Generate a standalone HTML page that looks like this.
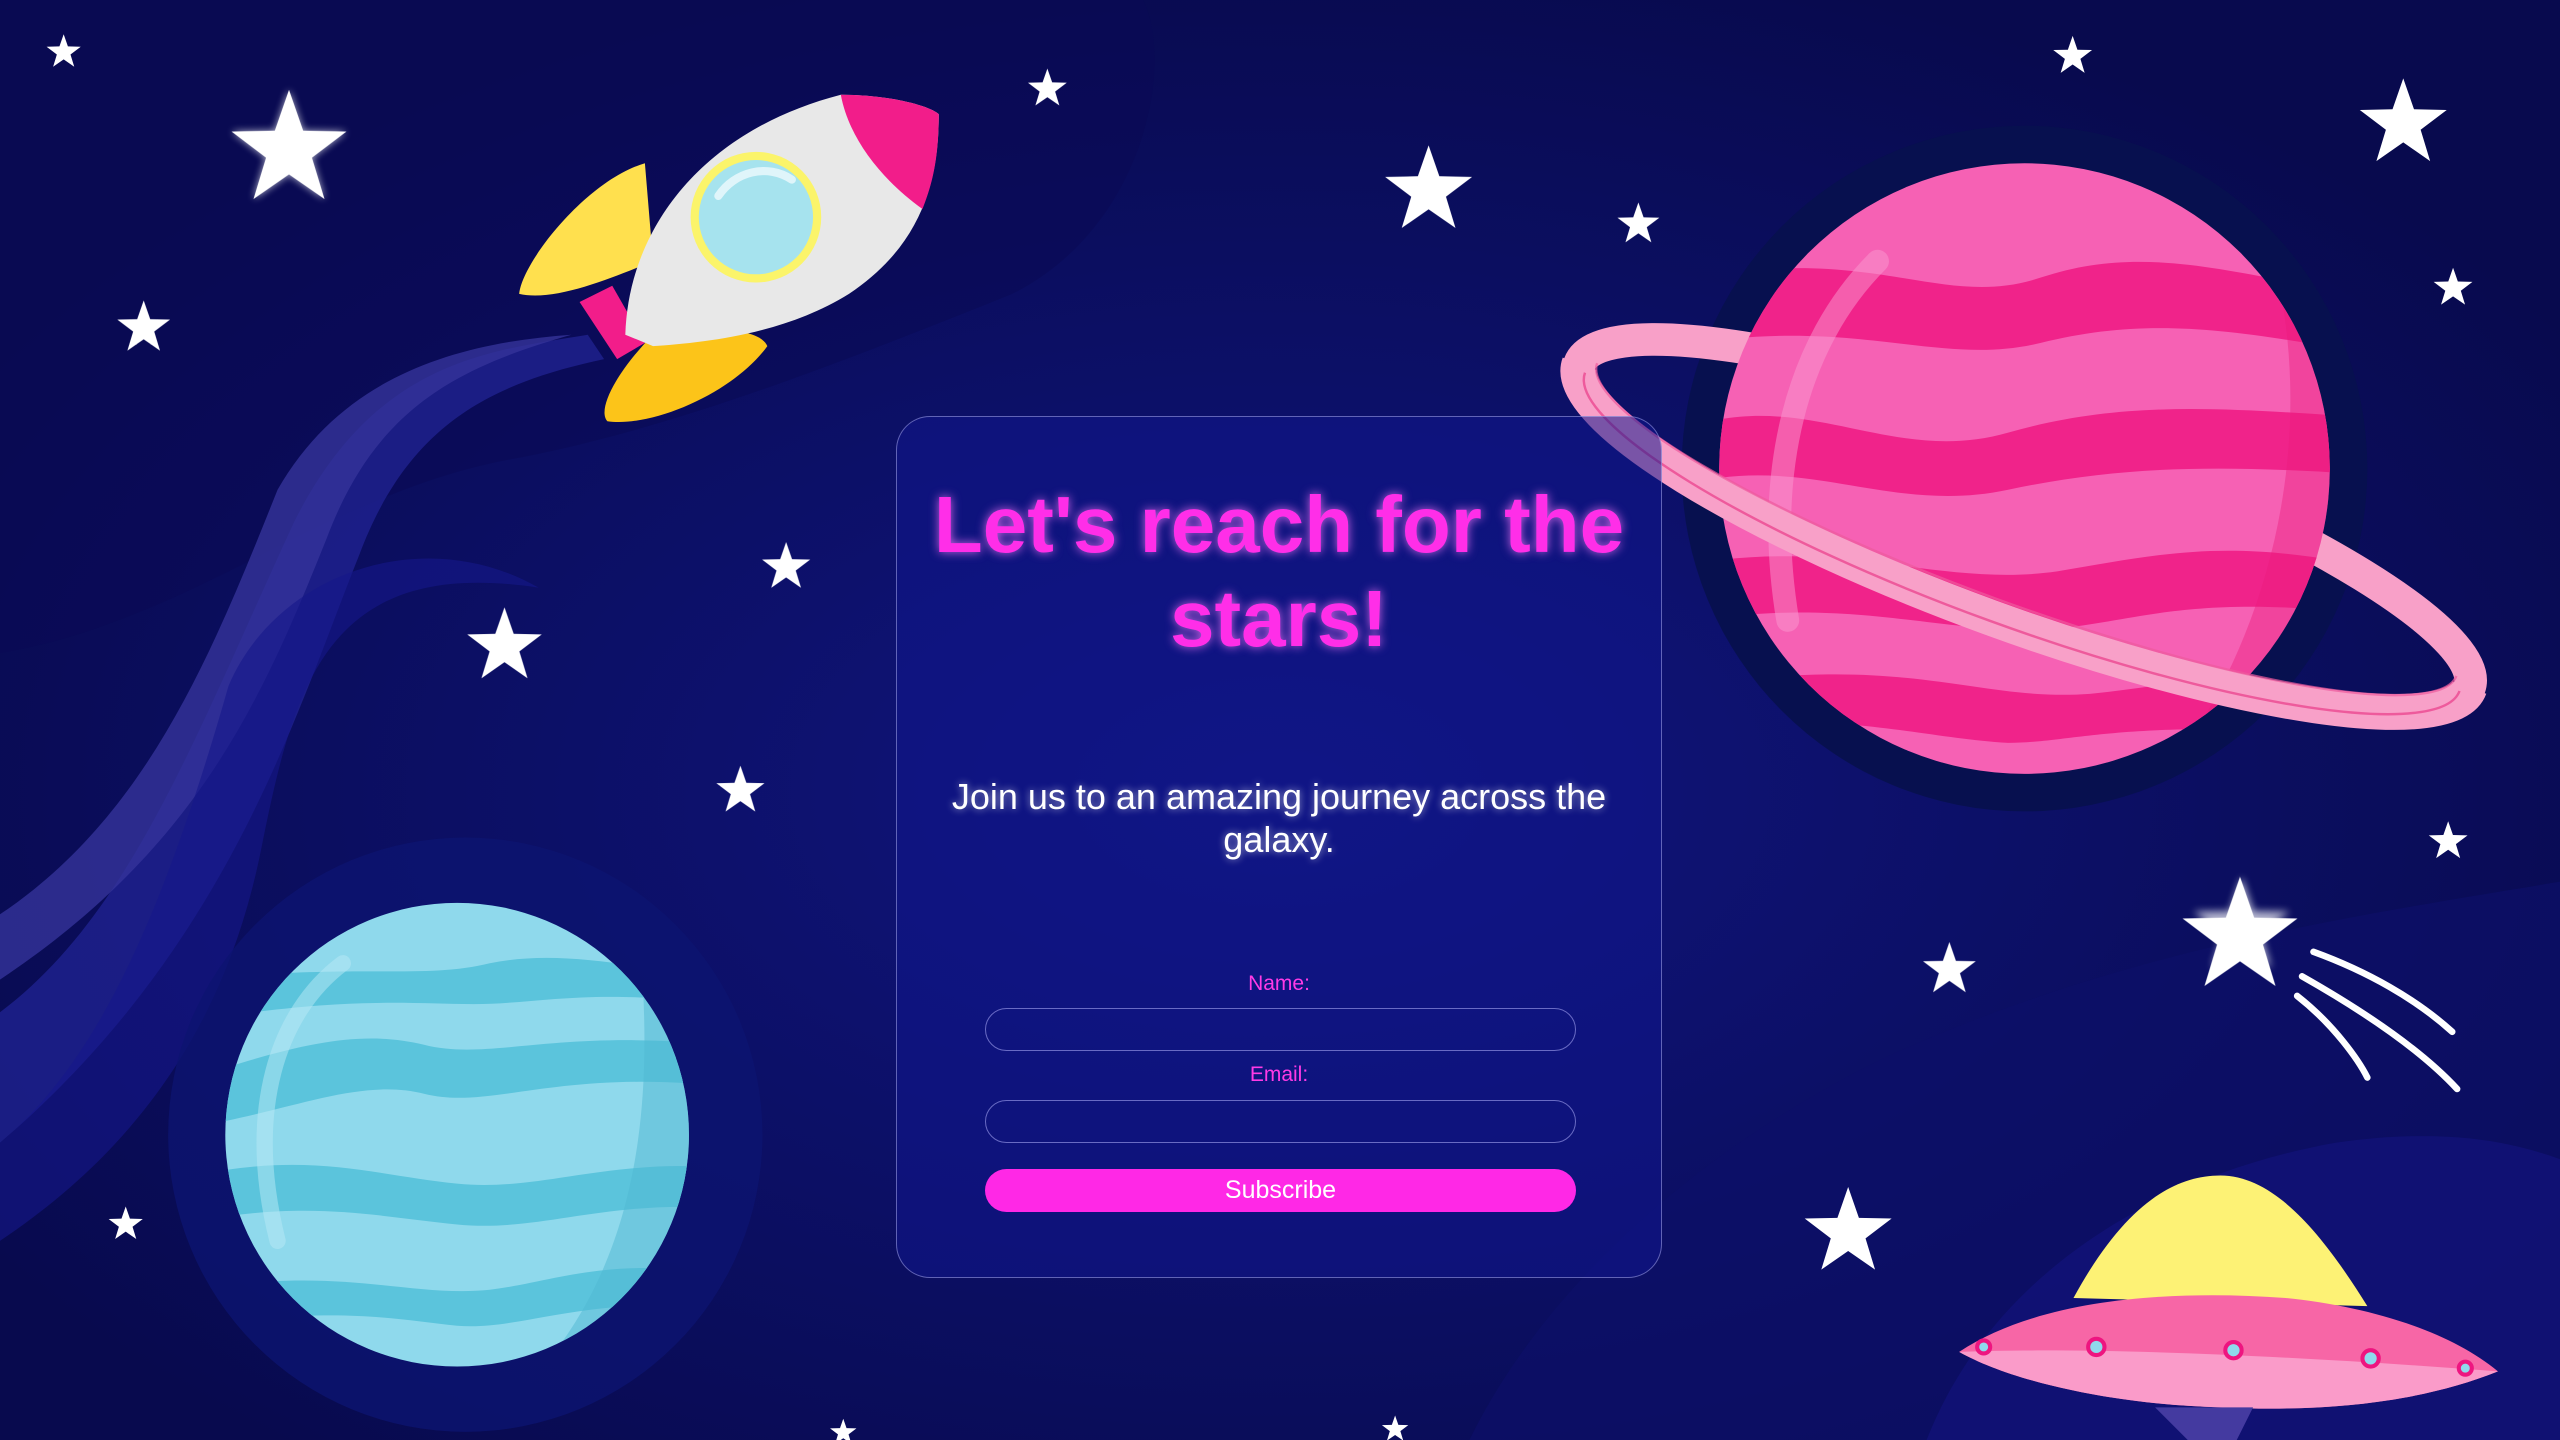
<!DOCTYPE html>
<html><head><meta charset="utf-8"><style>
html,body{margin:0;padding:0;width:2560px;height:1440px;overflow:hidden;background:#0a0a52;font-family:"Liberation Sans",Arial,sans-serif}
svg.bg{position:absolute;left:0;top:0;width:2560px;height:1440px}
.card{position:absolute;left:896px;top:416px;width:766px;height:862px;box-sizing:border-box;border:1.5px solid rgba(200,200,255,0.45);border-radius:34px;background:rgba(16,22,140,0.55);text-align:center}
h1{margin:0;position:absolute;left:0;right:0;top:61px;font-size:80px;line-height:94px;font-weight:bold;color:#ff2ee8;text-shadow:0 0 10px rgba(255,120,255,0.8)}
.sub{position:absolute;left:30px;right:30px;top:358px;font-size:36px;line-height:43px;color:#fff;text-shadow:0 0 8px rgba(255,255,255,0.6)}
.lab{position:absolute;left:0;right:0;font-size:21px;line-height:23px;color:#ff3ae6}
.inp{position:absolute;left:88px;width:591px;height:43px;box-sizing:border-box;border:1.5px solid rgba(180,180,255,0.55);border-radius:22px}
.btn{position:absolute;left:88px;top:752px;width:591px;height:43px;border-radius:22px;background:#ff28e6;color:#fff;font-size:25px;line-height:43px}
</style></head><body>
<svg class="bg" viewBox="0 0 1568 882" preserveAspectRatio="none">
<defs>
<radialGradient id="g1" cx="0.5" cy="0.55" r="0.6"><stop offset="0" stop-color="#10157e"/><stop offset="1" stop-color="#080a4e"/></radialGradient>
<filter id="glow"><feGaussianBlur stdDeviation="2.5"/></filter>
<clipPath id="cb"><circle cx="280" cy="695" r="142"/></clipPath>
<clipPath id="cp"><circle cx="1240" cy="287" r="187"/></clipPath>
<symbol id="st" viewBox="-1 -1 2 2"><path d="M0,-1 L0.235,-0.324 0.951,-0.309 0.38,0.124 0.588,0.809 0,0.4 -0.588,0.809 -0.38,0.124 -0.951,-0.309 -0.235,-0.324Z" fill="#fff"/></symbol>
</defs>
<rect width="1568" height="882" fill="url(#g1)"/>
<path d="M0 400 C120 380 200 300 320 280 C420 260 520 220 620 180 C700 140 720 40 700 0 L0 0Z" fill="#0a0a55" opacity="0.6"/>
<path d="M0 620 C80 560 120 450 180 320 C230 220 300 215 360 205 L370 220 C300 235 250 260 220 340 C180 440 140 580 0 700Z" fill="#1f2290" opacity="0.8"/>
<path d="M0 560 C90 500 130 400 170 300 C210 230 280 210 350 205 C280 225 230 250 200 330 C160 430 120 520 0 600Z" fill="#34339a" opacity="0.8"/>
<path d="M0 700 C60 650 100 560 140 420 C170 350 260 320 330 360 C200 340 180 420 160 520 C140 620 90 700 0 760Z" fill="#15178a" opacity="0.6"/>
<path d="M900 882 C950 780 1050 700 1150 650 C1300 580 1450 560 1568 540 L1568 882Z" fill="#0d0f68" opacity="0.7"/>
<path d="M1180 882 C1220 780 1320 720 1430 700 C1500 690 1540 700 1568 710 L1568 882Z" fill="#12137a" opacity="0.7"/>
<circle cx="285" cy="695" r="182" fill="#0c1470" opacity="0.8"/>
<circle cx="1240" cy="287" r="210" fill="#07104f"/>
<!-- blue planet -->
<circle cx="280" cy="695" r="142" fill="#8fd9ec"/>
<g fill="#5bc4dc" clip-path="url(#cb)"><path d="M120 660 C180 640 220 630 260 640 C300 650 340 630 440 640 L440 665 C340 655 300 680 260 670 C220 660 180 680 120 690Z"/>
<path d="M120 720 C190 705 230 720 280 725 C330 730 370 710 440 715 L440 740 C370 735 330 755 280 750 C230 745 190 735 120 748Z"/>
<path d="M120 790 C210 775 250 795 300 790 C340 785 370 770 440 780 L440 800 C350 795 320 815 280 812 C240 808 210 800 120 812Z"/>
<path d="M120 600 C220 590 260 600 300 590 C340 582 380 590 440 600 L440 615 C360 605 330 615 290 615 C250 615 215 610 120 625Z"/>
<path d="M390 560 C400 650 400 760 330 840 L450 840 L450 560Z" fill="#4fb8d2" opacity="0.5"/></g>
<path d="M210 590 C170 620 150 680 170 760" stroke="#b9eaf5" stroke-width="10" fill="none" opacity="0.5" stroke-linecap="round"/>
<!-- pink planet -->
<g transform="translate(1240,322) rotate(20)"><ellipse rx="290" ry="60" fill="none" stroke="#f8a0c8" stroke-width="20"/></g>
<circle cx="1240" cy="287" r="187" fill="#f661b4"/>
<g fill="#f0238a" clip-path="url(#cp)"><path d="M1040 170 C1150 150 1190 190 1250 170 C1310 150 1360 165 1440 180 L1440 215 C1360 200 1310 195 1250 210 C1190 225 1140 195 1040 210Z"/>
<path d="M1040 260 C1110 240 1160 285 1230 265 C1300 245 1360 250 1440 255 L1440 290 C1360 285 1300 285 1230 300 C1160 315 1110 280 1040 295Z"/>
<path d="M1040 345 C1130 330 1190 360 1260 350 C1320 340 1360 330 1440 345 L1440 375 C1340 365 1310 380 1260 385 C1190 390 1140 365 1040 380Z"/>
<path d="M1040 420 C1170 400 1210 430 1280 425 C1330 420 1360 410 1440 420 L1440 450 C1300 440 1270 455 1230 455 C1180 452 1150 440 1040 440Z"/>
<path d="M1380 120 C1420 220 1410 360 1330 470 L1440 470 L1440 120Z" fill="#ea1a7a" opacity="0.4"/></g>
<path d="M1150 160 C1100 210 1080 290 1095 380" stroke="#fa9ad0" stroke-width="14" fill="none" opacity="0.5" stroke-linecap="round"/>
<g transform="translate(1240,322) rotate(20)">
<path d="M-290 0 A290 60 0 0 0 290 0" stroke="#f8a0c8" stroke-width="22" fill="none"/>
<path d="M-285 4 A285 58 0 0 0 285 4" stroke="#ee5a9c" stroke-width="1.5" fill="none"/>
<path d="M-280 -4 A280 52 0 0 0 280 -4" stroke="#ee5a9c" stroke-width="1.5" fill="none" opacity="0.7"/></g>
<!-- rocket -->
<path d="M395 100 C360 110 320 160 318 180 C340 185 375 170 400 160Z" fill="#ffe04e"/>
<path d="M400 205 C380 225 365 250 372 258 C400 262 450 240 470 212 C465 200 430 200 400 205Z" fill="#fcc419"/>
<path d="M355 185 L375 175 L395 210 L378 220Z" fill="#f21d8a"/>
<path d="M383 205 C385 140 430 80 515 58 C545 58 570 65 575 70 C575 110 565 150 520 180 C480 205 430 210 400 212Z" fill="#e8e8e8"/>
<path d="M515 58 C545 58 570 65 575 70 C575 100 570 115 565 128 C540 110 520 85 515 58Z" fill="#f21d8a"/>
<circle cx="463" cy="133" r="40" fill="#fbf46a"/><circle cx="463" cy="133" r="35" fill="#a6e3ee"/>
<path d="M440 120 C450 105 470 100 485 110" stroke="#dff5fa" stroke-width="5" fill="none" stroke-linecap="round"/>
<!-- UFO -->
<path d="M1270 795 C1300 740 1330 720 1360 720 C1395 720 1425 760 1450 800Z" fill="#fdf275"/>
<path d="M1200 828 C1250 795 1330 790 1400 795 C1450 800 1500 815 1530 840 C1480 860 1420 865 1360 862 C1290 860 1230 845 1200 828Z" fill="#f766a6"/>
<path d="M1200 828 C1280 825 1400 830 1530 840 C1480 860 1420 865 1360 862 C1290 860 1230 845 1200 828Z" fill="#fa9bc9"/>
<path d="M1320 862 L1340 882 L1370 882 L1380 862Z" fill="#443aa0"/>
<g fill="#8fd9ec" stroke="#ee1580" stroke-width="2.5"><circle cx="1215" cy="825" r="4"/><circle cx="1284" cy="825" r="5"/><circle cx="1368" cy="827" r="5"/><circle cx="1452" cy="832" r="5"/><circle cx="1510" cy="838" r="4"/></g>
<g stroke="#fff" stroke-width="4" fill="none" stroke-linecap="round"><path d="M1417 583 C1450 595 1480 612 1502 632"/><path d="M1410 598 C1440 615 1480 640 1505 667"/><path d="M1407 610 C1430 628 1445 650 1450 660"/></g>
<!-- stars -->
<g filter="url(#glow)" opacity="0.7">
<use href="#st" x="1342" y="537" width="62" height="62"/><use href="#st" x="140" y="55" width="74" height="74"/>
</g>
<use href="#st" x="28" y="21" width="22" height="22"/><use href="#st" x="140" y="55" width="74" height="74"/>
<use href="#st" x="71" y="184" width="34" height="34"/><use href="#st" x="629" y="42" width="25" height="25"/>
<use href="#st" x="847" y="89" width="56" height="56"/><use href="#st" x="990" y="124" width="27" height="27"/>
<use href="#st" x="1257" y="22" width="25" height="25"/><use href="#st" x="1444" y="48" width="56" height="56"/>
<use href="#st" x="1490" y="164" width="25" height="25"/><use href="#st" x="466" y="332" width="31" height="31"/>
<use href="#st" x="285" y="372" width="48" height="48"/><use href="#st" x="438" y="469" width="31" height="31"/>
<use href="#st" x="1487" y="503" width="25" height="25"/><use href="#st" x="1335" y="537" width="74" height="74"/>
<use href="#st" x="1177" y="577" width="34" height="34"/><use href="#st" x="1104" y="727" width="56" height="56"/>
<use href="#st" x="66" y="739" width="22" height="22"/><use href="#st" x="508" y="869" width="17" height="17"/>
<use href="#st" x="846" y="867" width="17" height="17"/>
</svg>
<div class="card">
<h1>Let's reach for the stars!</h1>
<div class="sub">Join us to an amazing journey across the galaxy.</div>
<div class="lab" style="top:555px">Name:</div>
<div class="inp" style="top:591px"></div>
<div class="lab" style="top:646px">Email:</div>
<div class="inp" style="top:683px"></div>
<div class="btn">Subscribe</div>
</div>
</body></html>
